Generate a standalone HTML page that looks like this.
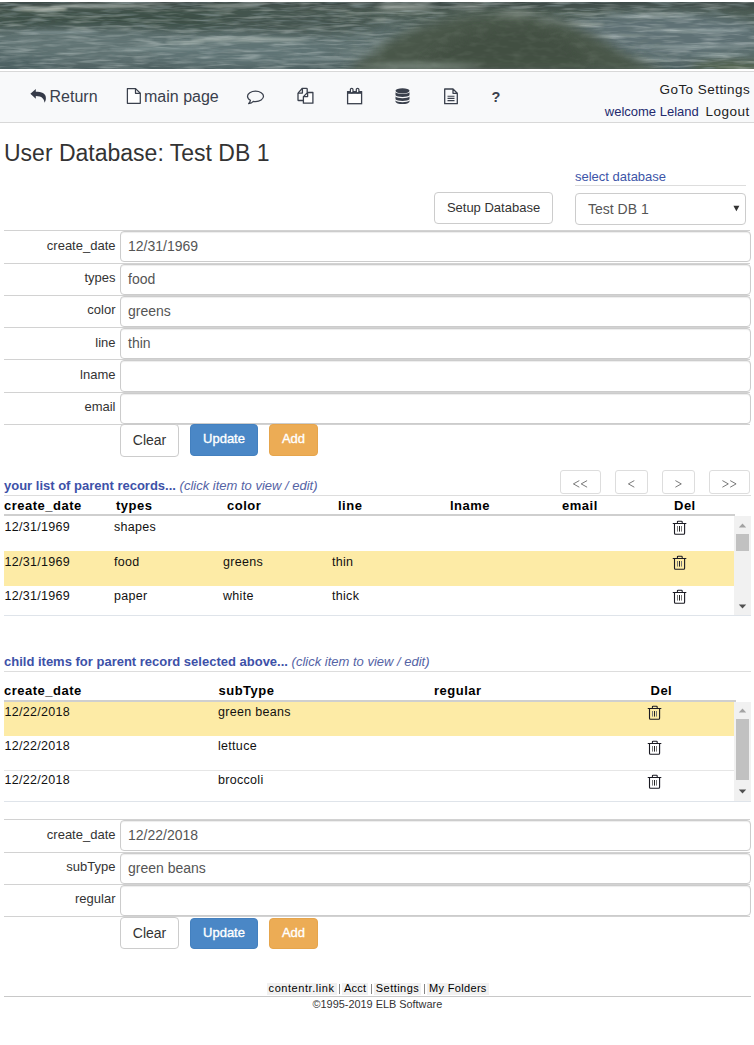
<!DOCTYPE html>
<html><head><meta charset="utf-8">
<style>
html,body{margin:0;padding:0;background:#fff;width:754px;height:1045px;overflow:hidden;position:relative;font-family:"Liberation Sans",sans-serif;color:#333}
.a{position:absolute}
.t{position:absolute;white-space:nowrap;line-height:1}
.hl{position:absolute;height:1px;background:#ddd}
#banner{position:absolute;left:0;top:3px;width:754px;height:66px;overflow:hidden;background:#5f7673}
#nav{position:absolute;left:0;top:71px;width:754px;height:50px;background:#f8f9fa;border-top:1px solid #d8d8d8;border-bottom:1px solid #d8d8d8}
.nv{font-size:16px;color:#3a404c}
.btn{position:absolute;box-sizing:border-box;border-radius:4px;text-align:center;white-space:nowrap}
.bd{background:#fff;border:1px solid #ccc;color:#333}
.bp{background:#4a87c6;border:1px solid #4380bf;color:#fff;font-size:13px;-webkit-text-stroke:0.35px #fff}
.bw{background:#ecac55;border:1px solid #e6a54c;color:#fff;font-size:13px;-webkit-text-stroke:0.35px #fff}
.lbl{position:absolute;white-space:nowrap;line-height:1;font-size:13px;color:#333;text-align:right;width:112px;left:3.5px}
.inp{position:absolute;box-sizing:border-box;left:120px;width:631px;border:1px solid #ccc;border-radius:4px;box-shadow:inset 0 1px 1px rgba(0,0,0,.075);background:#fff}
.iv{position:absolute;white-space:nowrap;line-height:1;font-size:14px;color:#555;left:128px}
.sec{font-size:13px;font-weight:bold;color:#3d51a8}
.it{font-size:13px;font-style:italic;color:#5563a5;font-weight:normal}
.th{font-size:13px;font-weight:bold;color:#000;letter-spacing:0.5px}
.td{font-size:12.5px;color:#111;letter-spacing:0.3px}
.pg{position:absolute;top:470px;height:24px;box-sizing:border-box;border:1px solid #ddd;border-radius:3px;color:#777;font-size:12px;text-align:center;line-height:25px;background:#fff}
.sb{position:absolute;background:#f1f1f1;width:17px}
.sbt{position:absolute;background:#c1c1c1;left:2px;width:13px}
</style></head><body>
<svg class="a" style="left:0;top:2px" width="754" height="67" viewBox="0 0 754 66" preserveAspectRatio="none"><defs><linearGradient id="bg" x1="0" y1="0" x2="0" y2="1"><stop offset="0" stop-color="#3f4b49"/><stop offset="0.15" stop-color="#4a5a52"/><stop offset="0.4" stop-color="#566866"/><stop offset="0.62" stop-color="#5f7272"/><stop offset="0.85" stop-color="#586a6b"/><stop offset="1" stop-color="#4d5f60"/></linearGradient><filter id="b4" x="-50%" y="-50%" width="200%" height="200%"><feGaussianBlur stdDeviation="5"/></filter><filter id="b3" x="-20%" y="-50%" width="140%" height="200%"><feGaussianBlur stdDeviation="3"/></filter><filter id="b2" x="-50%" y="-50%" width="200%" height="200%"><feGaussianBlur stdDeviation="1.2"/></filter><filter id="nz" x="0" y="0" width="100%" height="100%"><feTurbulence type="fractalNoise" baseFrequency="0.03 0.3" numOctaves="3" seed="7"/><feColorMatrix type="matrix" values="0 0 0 0 0.85  0 0 0 0 0.9  0 0 0 0 0.88  0 0 0 -3 1.62"/></filter><filter id="nz2" x="0" y="0" width="100%" height="100%"><feTurbulence type="fractalNoise" baseFrequency="0.04 0.35" numOctaves="2" seed="3"/><feColorMatrix type="matrix" values="0 0 0 0 0.18  0 0 0 0 0.24  0 0 0 0 0.24  0 0 0 3 -1.6"/></filter><filter id="nz3" x="0" y="0" width="100%" height="100%"><feTurbulence type="fractalNoise" baseFrequency="0.08 0.2" numOctaves="2" seed="11"/><feColorMatrix type="matrix" values="0 0 0 0 0.2  0 0 0 0 0.25  0 0 0 0 0.2  0 0 0 2 -0.9"/></filter></defs><rect width="754" height="66" fill="url(#bg)"/><g filter="url(#b4)"><ellipse cx="170" cy="17" rx="210" ry="9" fill="#3b4d44"/><ellipse cx="300" cy="20" rx="80" ry="10" fill="#44554f"/><ellipse cx="660" cy="32" rx="100" ry="22" fill="#5e7174"/><ellipse cx="90" cy="42" rx="90" ry="14" fill="#627575"/><ellipse cx="240" cy="50" rx="90" ry="12" fill="#607476"/><ellipse cx="735" cy="64" rx="45" ry="6" fill="#55654c"/><ellipse cx="20" cy="60" rx="40" ry="6" fill="#4c6162"/></g><g filter="url(#b2)" opacity="0.8"><ellipse cx="40" cy="7" rx="28" ry="2.2" fill="#b0b8ae"/><ellipse cx="100" cy="4" rx="50" ry="1.8" fill="#a2aca6"/><ellipse cx="230" cy="4" rx="30" ry="1.5" fill="#9aa49e"/><ellipse cx="250" cy="37" rx="60" ry="2.2" fill="#a2afaa"/><ellipse cx="185" cy="40" rx="20" ry="1.8" fill="#9aa8a4"/><ellipse cx="580" cy="22" rx="25" ry="1.8" fill="#a2ada9"/><ellipse cx="650" cy="14" rx="45" ry="1.6" fill="#9aa8a8"/><ellipse cx="700" cy="28" rx="50" ry="1.6" fill="#9cabab"/><ellipse cx="690" cy="44" rx="50" ry="1.6" fill="#93a3a3"/><ellipse cx="160" cy="46" rx="50" ry="1.3" fill="#889a9a"/><ellipse cx="60" cy="30" rx="40" ry="1.3" fill="#86989a"/><ellipse cx="330" cy="56" rx="40" ry="1.3" fill="#8a9b9b"/><ellipse cx="640" cy="56" rx="40" ry="1.3" fill="#889999"/><ellipse cx="720" cy="52" rx="30" ry="1.2" fill="#8fa0a0"/><ellipse cx="610" cy="33" rx="30" ry="1.2" fill="#95a4a4"/></g><rect width="754" height="66" filter="url(#nz)" opacity="0.3"/><rect width="754" height="66" filter="url(#nz2)" opacity="0.85"/><path filter="url(#b4)" d="M 345 70 C 380 40, 420 14, 490 11 C 545 9, 585 25, 615 45 C 630 55, 650 62, 670 70 Z" fill="#4a5649"/><path filter="url(#b4)" d="M 420 62 C 450 35, 480 25, 520 25 C 550 25, 575 40, 590 62 Z" fill="#434f43"/><rect x="340" y="8" width="330" height="58" filter="url(#nz3)" opacity="0.25"/><g filter="url(#b3)" opacity="0.75"><ellipse cx="405" cy="5" rx="30" ry="3" fill="#b8c0b8"/><ellipse cx="470" cy="4" rx="18" ry="2" fill="#aab3ad"/><ellipse cx="515" cy="12" rx="20" ry="1.8" fill="#aeb6ae"/><ellipse cx="550" cy="18" rx="15" ry="1.5" fill="#a0aaa5"/><ellipse cx="420" cy="63" rx="60" ry="2.2" fill="#a6b2ac"/><ellipse cx="360" cy="50" rx="25" ry="1.5" fill="#8d9d9b"/></g></svg>
<div id="nav"></div>

<svg class="a" style="left:30px;top:89px" width="17" height="15" viewBox="0 0 17 15"><path d="M0.4 4.8 L5.8 0.1 V2.8 C11.5 2.8 15.9 4.2 15.9 9 C15.9 11 15.3 12.5 14.5 13.8 C14.2 10 12 7.1 5.8 7.1 V9.8 Z" fill="#353a48"/></svg>
<div class="t nv" style="left:49.5px;top:89.1px">Return</div>
<svg class="a" style="left:126px;top:88px" width="15" height="16" viewBox="0 0 15 16"><path d="M1.4 0.6 H9.5 L14.3 5.3 V15.3 H1.4 Z" fill="#fff" stroke="#3a404c" stroke-width="1.25" stroke-linejoin="round"/><path d="M9.5 0.6 V5.3 H14.3" fill="none" stroke="#3a404c" stroke-width="1.25" stroke-linejoin="round"/></svg>
<div class="t nv" style="left:144px;top:89.1px">main page</div>
<svg class="a" style="left:246px;top:90px" width="19" height="15" viewBox="0 0 19 15"><path d="M9.5 1.2 C5 1.2 1.5 3.6 1.5 6.3 C1.5 8 2.7 9.4 4.4 10.3 C4.2 11.6 3.6 12.7 2.6 13.6 C4.6 13.4 6.3 12.5 7.3 11.3 C8 11.4 8.8 11.5 9.5 11.5 C14 11.5 17.5 9 17.5 6.3 C17.5 3.6 14 1.2 9.5 1.2 Z" fill="none" stroke="#3a404c" stroke-width="1.25" stroke-linejoin="round"/></svg>
<svg class="a" style="left:296px;top:87px" width="19" height="18" viewBox="0 0 19 18"><path d="M2 6.1 L6.4 1.3 H10.4 Q11.2 1.3 11.2 2.1 V5.6" fill="none" stroke="#3a404c" stroke-width="1.3" stroke-linejoin="round"/><path d="M2 6.1 V12.9 Q2 13.5 2.6 13.5 H7.4" fill="none" stroke="#3a404c" stroke-width="1.3"/><path d="M2 6.1 H6.4 V1.3" fill="none" stroke="#3a404c" stroke-width="1.3" stroke-linejoin="round"/><path d="M7.4 9.6 L11.6 5.5 H16.9 V16.2 H7.4 Z" fill="#fff" stroke="#3a404c" stroke-width="1.3" stroke-linejoin="round"/><path d="M7.4 9.6 H11.6 V5.5" fill="none" stroke="#3a404c" stroke-width="1.3" stroke-linejoin="round"/></svg>
<svg class="a" style="left:346px;top:87px" width="17" height="18" viewBox="0 0 17 18"><rect x="1.6" y="4.8" width="14" height="11.9" fill="#fff" stroke="#3a404c" stroke-width="1.3"/><rect x="1.2" y="4.2" width="14.8" height="2.6" fill="#3a404c"/><rect x="4.4" y="1.3" width="2.6" height="4.6" rx="1.3" fill="#fff" stroke="#3a404c" stroke-width="1.2"/><rect x="10.3" y="1.3" width="2.6" height="4.6" rx="1.3" fill="#fff" stroke="#3a404c" stroke-width="1.2"/></svg>
<svg class="a" style="left:395px;top:88px" width="15" height="16" viewBox="0 0 15 16"><ellipse cx="7.5" cy="2.8" rx="7" ry="2.6" fill="#3a404c"/><path d="M0.5 4.3 C2 6.5 13 6.5 14.5 4.3 V7.3 C13 9.5 2 9.5 0.5 7.3 Z" fill="#3a404c"/><path d="M0.5 8.6 C2 10.8 13 10.8 14.5 8.6 V11.3 C13 13.5 2 13.5 0.5 11.3 Z" fill="#3a404c"/><path d="M0.5 12.6 C2 14.8 13 14.8 14.5 12.6 V13.4 C14.5 15 11 16 7.5 16 C4 16 0.5 15 0.5 13.4 Z" fill="#3a404c"/></svg>
<svg class="a" style="left:443px;top:88px" width="16" height="17" viewBox="0 0 16 17"><path d="M1.7 1 H10 L14.3 5.3 V15.7 H1.7 Z M10 1 V5.3 H14.3" fill="none" stroke="#3a404c" stroke-width="1.3" stroke-linejoin="round"/><path d="M4.5 8.2 H11.5 M4.5 10.4 H11.5 M4.5 12.6 H11.5" stroke="#3a404c" stroke-width="1.1"/></svg>
<div class="t" style="left:491.5px;top:90px;font-size:14.5px;font-weight:bold;color:#3a404c">?</div>
<div class="t" style="left:659.5px;top:82.6px;font-size:13.5px;color:#222;letter-spacing:0.45px">GoTo Settings</div>
<div class="t" style="left:604.8px;top:104.6px;font-size:13px;color:#232a6e">welcome Leland</div>
<div class="t" style="left:705.5px;top:104.5px;font-size:13.5px;color:#222;letter-spacing:0.5px">Logout</div>
<div class="t" style="left:4px;top:142px;font-size:23px;color:#333">User Database: Test DB 1</div>
<div class="t" style="left:575px;top:170.2px;font-size:13px;color:#3d55a8">select database</div>
<div class="hl" style="left:575px;top:185px;width:171px;background:#ddd"></div>
<div class="btn bd" style="left:434px;top:192px;width:119px;height:32px;font-size:13px;line-height:30px">Setup Database</div>
<div class="btn bd" style="left:575px;top:193px;width:171px;height:32px;"></div>
<div class="t" style="left:588px;top:202px;font-size:14px;color:#555">Test DB 1</div>
<svg class="a" style="left:732.5px;top:205px" width="7" height="7" viewBox="0 0 7 7"><path d="M0.4 0.8 H6.4 L3.4 6.2 Z" fill="#333"/></svg>
<div class="hl" style="left:4px;top:230.20px;width:746px;background:#d2d2d2"></div>
<div class="hl" style="left:4px;top:262.50px;width:746px;background:#d2d2d2"></div>
<div class="hl" style="left:4px;top:294.80px;width:746px;background:#d2d2d2"></div>
<div class="hl" style="left:4px;top:327.10px;width:746px;background:#d2d2d2"></div>
<div class="hl" style="left:4px;top:359.40px;width:746px;background:#d2d2d2"></div>
<div class="hl" style="left:4px;top:391.70px;width:746px;background:#d2d2d2"></div>
<div class="hl" style="left:4px;top:424.00px;width:746px;background:#d2d2d2"></div>
<div class="inp" style="top:231.20px;height:31.30px"></div>
<div class="lbl" style="top:238.70px">create_date</div>
<div class="iv" style="top:239.25px">12/31/1969</div>
<div class="inp" style="top:263.50px;height:31.30px"></div>
<div class="lbl" style="top:271.00px">types</div>
<div class="iv" style="top:271.55px">food</div>
<div class="inp" style="top:295.80px;height:31.30px"></div>
<div class="lbl" style="top:303.30px">color</div>
<div class="iv" style="top:303.85px">greens</div>
<div class="inp" style="top:328.10px;height:31.30px"></div>
<div class="lbl" style="top:335.60px">line</div>
<div class="iv" style="top:336.15px">thin</div>
<div class="inp" style="top:360.40px;height:31.30px"></div>
<div class="lbl" style="top:367.90px">lname</div>
<div class="inp" style="top:392.70px;height:31.30px"></div>
<div class="lbl" style="top:400.20px">email</div>
<div class="btn bd" style="left:120px;top:423.5px;width:59px;height:33px;font-size:14px;line-height:31px">Clear</div>
<div class="btn bp" style="left:190px;top:424.0px;width:68px;height:32px;line-height:28px">Update</div>
<div class="btn bw" style="left:269px;top:424.0px;width:49px;height:32px;line-height:28px">Add</div>
<!-- parent section -->
<div class="t sec" style="left:4px;top:479px">your list of parent records... <span class="it">(click item to view / edit)</span></div>
<div class="pg" style="left:560px;width:41px"></div>
<div class="pg" style="left:615px;width:33px"></div>
<div class="pg" style="left:662px;width:33px"></div>
<div class="pg" style="left:709px;width:41px"></div>
<svg class="a" style="left:572.5px;top:479.5px" width="16" height="8"><path d="M6.3 0.6 L0.4 3.9 L6.3 7.2" fill="none" stroke="#6a6a6a" stroke-width="0.9"/><path d="M14.1 0.6 L8.2 3.9 L14.1 7.2" fill="none" stroke="#6a6a6a" stroke-width="0.9"/></svg>
<svg class="a" style="left:628px;top:479.5px" width="8" height="8"><path d="M6.3 0.6 L0.4 3.9 L6.3 7.2" fill="none" stroke="#6a6a6a" stroke-width="0.9"/></svg>
<svg class="a" style="left:675px;top:479.5px" width="8" height="8"><path d="M0.4 0.6 L6.3 3.9 L0.4 7.2" fill="none" stroke="#6a6a6a" stroke-width="0.9"/></svg>
<svg class="a" style="left:722px;top:479.5px" width="16" height="8"><path d="M0.4 0.6 L6.3 3.9 L0.4 7.2" fill="none" stroke="#6a6a6a" stroke-width="0.9"/><path d="M8.2 0.6 L14.1 3.9 L8.2 7.2" fill="none" stroke="#6a6a6a" stroke-width="0.9"/></svg>
<div class="hl" style="left:4px;top:495px;width:747px"></div>
<div class="t th" style="left:4px;top:498.6px">create_date</div>
<div class="t th" style="left:116px;top:498.6px">types</div>
<div class="t th" style="left:227px;top:498.6px">color</div>
<div class="t th" style="left:338px;top:498.6px">line</div>
<div class="t th" style="left:450px;top:498.6px">lname</div>
<div class="t th" style="left:562px;top:498.6px">email</div>
<div class="t th" style="left:674px;top:498.6px">Del</div>
<div class="a" style="left:4px;top:514px;width:731px;height:2px;background:#cfcfcf"></div>
<div class="a" style="left:4px;top:551.4px;width:731px;height:34.5px;background:#fdeba6"></div>
<div class="t td" style="left:4.5px;top:520.5px">12/31/1969</div>
<div class="t td" style="left:114px;top:520.5px">shapes</div>
<div class="t td" style="left:4.5px;top:555.7px">12/31/1969</div>
<div class="t td" style="left:114px;top:555.7px">food</div>
<div class="t td" style="left:223px;top:555.7px">greens</div>
<div class="t td" style="left:332px;top:555.7px">thin</div>
<div class="t td" style="left:4.5px;top:589.5px">12/31/1969</div>
<div class="t td" style="left:114px;top:589.5px">paper</div>
<div class="t td" style="left:223px;top:589.5px">white</div>
<div class="t td" style="left:332px;top:589.5px">thick</div>
<svg class="a" style="left:672px;top:520px" width="16" height="16" viewBox="0 0 16 16"><path d="M5.4 3 V2 Q5.4 1.3 6.1 1.3 H9.5 Q10.2 1.3 10.2 2 V3" fill="none" stroke="#1a1a22" stroke-width="1.05"/><path d="M1.2 3.5 H13.9" stroke="#1a1a22" stroke-width="1.1" stroke-linecap="round"/><path d="M2.5 3.6 V13.3 Q2.5 14.3 3.5 14.3 H11.6 Q12.6 14.3 12.6 13.3 V3.6" fill="none" stroke="#1a1a22" stroke-width="1.1"/><path d="M5.5 6 V11.6 M9.5 6 V11.6" stroke="#777" stroke-width="1"/><path d="M7.5 6 V11.6" stroke="#222" stroke-width="1"/></svg>
<svg class="a" style="left:672px;top:555px" width="16" height="16" viewBox="0 0 16 16"><path d="M5.4 3 V2 Q5.4 1.3 6.1 1.3 H9.5 Q10.2 1.3 10.2 2 V3" fill="none" stroke="#1a1a22" stroke-width="1.05"/><path d="M1.2 3.5 H13.9" stroke="#1a1a22" stroke-width="1.1" stroke-linecap="round"/><path d="M2.5 3.6 V13.3 Q2.5 14.3 3.5 14.3 H11.6 Q12.6 14.3 12.6 13.3 V3.6" fill="none" stroke="#1a1a22" stroke-width="1.1"/><path d="M5.5 6 V11.6 M9.5 6 V11.6" stroke="#777" stroke-width="1"/><path d="M7.5 6 V11.6" stroke="#222" stroke-width="1"/></svg>
<svg class="a" style="left:672px;top:589px" width="16" height="16" viewBox="0 0 16 16"><path d="M5.4 3 V2 Q5.4 1.3 6.1 1.3 H9.5 Q10.2 1.3 10.2 2 V3" fill="none" stroke="#1a1a22" stroke-width="1.05"/><path d="M1.2 3.5 H13.9" stroke="#1a1a22" stroke-width="1.1" stroke-linecap="round"/><path d="M2.5 3.6 V13.3 Q2.5 14.3 3.5 14.3 H11.6 Q12.6 14.3 12.6 13.3 V3.6" fill="none" stroke="#1a1a22" stroke-width="1.1"/><path d="M5.5 6 V11.6 M9.5 6 V11.6" stroke="#777" stroke-width="1"/><path d="M7.5 6 V11.6" stroke="#222" stroke-width="1"/></svg>
<div class="sb" style="left:734px;top:516px;height:99px"></div>
<div class="sbt" style="left:736px;top:534px;height:17px"></div>
<svg class="a" style="left:738px;top:522.5px" width="9" height="5" viewBox="0 0 9 5"><path d="M0.8 4.6 L4.5 0.6 L8.2 4.6 Z" fill="#a3a3a3"/></svg>
<svg class="a" style="left:738px;top:603.5px" width="9" height="5" viewBox="0 0 9 5"><path d="M0.8 0.4 L4.5 4.4 L8.2 0.4 Z" fill="#505050"/></svg>
<div class="hl" style="left:4px;top:615px;width:747px;background:#dfe4ea"></div>
<!-- child section -->
<div class="t sec" style="left:4px;top:655px">child items for parent record selected above... <span class="it">(click item to view / edit)</span></div>
<div class="hl" style="left:4px;top:671px;width:747px"></div>
<div class="t th" style="left:4px;top:684px">create_date</div>
<div class="t th" style="left:218.5px;top:684px">subType</div>
<div class="t th" style="left:434px;top:684px">regular</div>
<div class="t th" style="left:650.5px;top:684px">Del</div>
<div class="a" style="left:4px;top:699.5px;width:732px;height:2px;background:#cfcfcf"></div>
<div class="a" style="left:4px;top:701.5px;width:731px;height:34.6px;background:#fdeba6"></div>
<div class="hl" style="left:4px;top:770px;width:731px;background:#e6e6e6"></div>
<div class="t td" style="left:4.5px;top:706.3px">12/22/2018</div>
<div class="t td" style="left:218px;top:706.3px">green beans</div>
<div class="t td" style="left:4.5px;top:740.1px">12/22/2018</div>
<div class="t td" style="left:218px;top:740.1px">lettuce</div>
<div class="t td" style="left:4.5px;top:774.3px">12/22/2018</div>
<div class="t td" style="left:218px;top:774.3px">broccoli</div>
<svg class="a" style="left:647px;top:705px" width="16" height="16" viewBox="0 0 16 16"><path d="M5.4 3 V2 Q5.4 1.3 6.1 1.3 H9.5 Q10.2 1.3 10.2 2 V3" fill="none" stroke="#1a1a22" stroke-width="1.05"/><path d="M1.2 3.5 H13.9" stroke="#1a1a22" stroke-width="1.1" stroke-linecap="round"/><path d="M2.5 3.6 V13.3 Q2.5 14.3 3.5 14.3 H11.6 Q12.6 14.3 12.6 13.3 V3.6" fill="none" stroke="#1a1a22" stroke-width="1.1"/><path d="M5.5 6 V11.6 M9.5 6 V11.6" stroke="#777" stroke-width="1"/><path d="M7.5 6 V11.6" stroke="#222" stroke-width="1"/></svg>
<svg class="a" style="left:647px;top:740px" width="16" height="16" viewBox="0 0 16 16"><path d="M5.4 3 V2 Q5.4 1.3 6.1 1.3 H9.5 Q10.2 1.3 10.2 2 V3" fill="none" stroke="#1a1a22" stroke-width="1.05"/><path d="M1.2 3.5 H13.9" stroke="#1a1a22" stroke-width="1.1" stroke-linecap="round"/><path d="M2.5 3.6 V13.3 Q2.5 14.3 3.5 14.3 H11.6 Q12.6 14.3 12.6 13.3 V3.6" fill="none" stroke="#1a1a22" stroke-width="1.1"/><path d="M5.5 6 V11.6 M9.5 6 V11.6" stroke="#777" stroke-width="1"/><path d="M7.5 6 V11.6" stroke="#222" stroke-width="1"/></svg>
<svg class="a" style="left:647px;top:774px" width="16" height="16" viewBox="0 0 16 16"><path d="M5.4 3 V2 Q5.4 1.3 6.1 1.3 H9.5 Q10.2 1.3 10.2 2 V3" fill="none" stroke="#1a1a22" stroke-width="1.05"/><path d="M1.2 3.5 H13.9" stroke="#1a1a22" stroke-width="1.1" stroke-linecap="round"/><path d="M2.5 3.6 V13.3 Q2.5 14.3 3.5 14.3 H11.6 Q12.6 14.3 12.6 13.3 V3.6" fill="none" stroke="#1a1a22" stroke-width="1.1"/><path d="M5.5 6 V11.6 M9.5 6 V11.6" stroke="#777" stroke-width="1"/><path d="M7.5 6 V11.6" stroke="#222" stroke-width="1"/></svg>
<div class="sb" style="left:734px;top:701.5px;height:99.0px"></div>
<div class="sbt" style="left:736px;top:719.4px;height:60.39999999999998px"></div>
<svg class="a" style="left:738px;top:708.0px" width="9" height="5" viewBox="0 0 9 5"><path d="M0.8 4.6 L4.5 0.6 L8.2 4.6 Z" fill="#a3a3a3"/></svg>
<svg class="a" style="left:738px;top:789.0px" width="9" height="5" viewBox="0 0 9 5"><path d="M0.8 0.4 L4.5 4.4 L8.2 0.4 Z" fill="#505050"/></svg>
<div class="hl" style="left:4px;top:800.5px;width:747px;background:#dfe4ea"></div>
<div class="hl" style="left:4px;top:819.20px;width:746px;background:#d2d2d2"></div>
<div class="hl" style="left:4px;top:851.50px;width:746px;background:#d2d2d2"></div>
<div class="hl" style="left:4px;top:883.80px;width:746px;background:#d2d2d2"></div>
<div class="hl" style="left:4px;top:916.10px;width:746px;background:#d2d2d2"></div>
<div class="inp" style="top:820.20px;height:31.30px"></div>
<div class="lbl" style="top:827.70px">create_date</div>
<div class="iv" style="top:828.25px">12/22/2018</div>
<div class="inp" style="top:852.50px;height:31.30px"></div>
<div class="lbl" style="top:860.00px">subType</div>
<div class="iv" style="top:860.55px">green beans</div>
<div class="inp" style="top:884.80px;height:31.30px"></div>
<div class="lbl" style="top:892.30px">regular</div>
<div class="btn bd" style="left:120px;top:917px;width:59px;height:32px;font-size:14px;line-height:30px">Clear</div>
<div class="btn bp" style="left:190px;top:917.5px;width:68px;height:31px;line-height:27px">Update</div>
<div class="btn bw" style="left:269px;top:917.5px;width:49px;height:31px;line-height:27px">Add</div>
<div class="a" style="left:267px;top:982.5px;width:69.5px;height:12.5px;background:#f1f1f1"></div>
<div class="a" style="left:342px;top:982.5px;width:25.5px;height:12.5px;background:#f1f1f1"></div>
<div class="a" style="left:374px;top:982.5px;width:47px;height:12.5px;background:#f1f1f1"></div>
<div class="a" style="left:427px;top:982.5px;width:62px;height:12.5px;background:#f1f1f1"></div>
<div class="t" style="left:268.6px;top:982.6px;font-size:11px;color:#000;letter-spacing:0.55px">contentr.link</div>
<div class="t" style="left:344px;top:982.6px;font-size:11px;color:#000;letter-spacing:0.2px">Acct</div>
<div class="t" style="left:375.8px;top:982.6px;font-size:11px;color:#000;letter-spacing:0.45px">Settings</div>
<div class="t" style="left:429px;top:982.6px;font-size:11px;color:#000;letter-spacing:0.33px">My Folders</div>
<div class="a" style="left:338.8px;top:983.5px;width:1px;height:10.5px;background:#888"></div>
<div class="a" style="left:370.6px;top:983.5px;width:1px;height:10.5px;background:#888"></div>
<div class="a" style="left:423.8px;top:983.5px;width:1px;height:10.5px;background:#888"></div>
<div class="hl" style="left:4px;top:996px;width:747px;background:#c8c8c8"></div>
<div class="t" style="left:312.5px;top:999px;font-size:10.9px;color:#333">&copy;1995-2019 ELB Software</div>
</body></html>
